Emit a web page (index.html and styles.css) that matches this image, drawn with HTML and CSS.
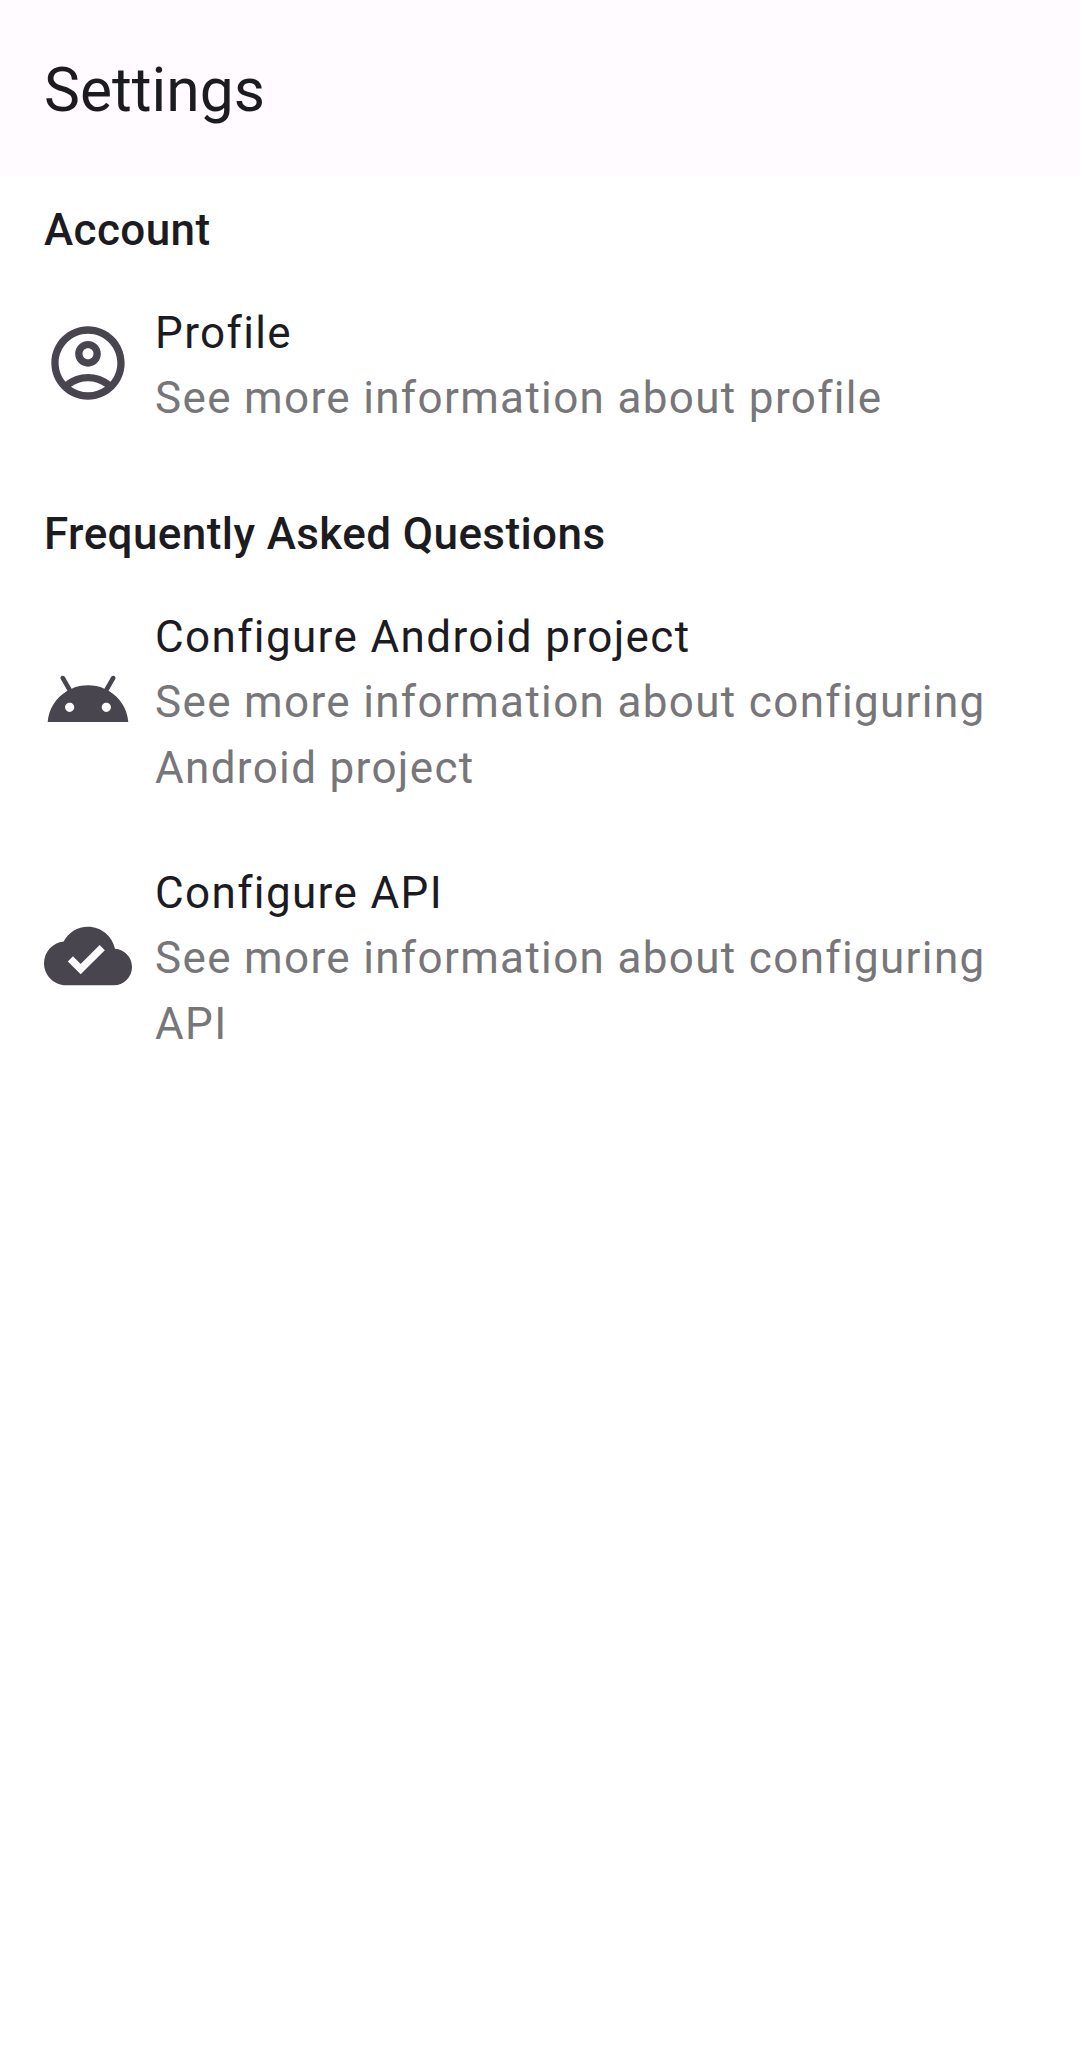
FILE: index.html
```html
<!DOCTYPE html>
<html lang="en">
<head>
<meta charset="utf-8">
<title>Settings</title>
<link rel="stylesheet" href="styles.css">
</head>
<body>
<header class="app-bar"><h1 class="app-title">Settings</h1></header>
<main class="content">
  <section class="group">
    <h2 class="group-title">Account</h2>
    <div class="item">
      <svg class="icon" viewBox="0 0 24 24"><path d="M12 2C6.480 2 2 6.480 2 12s4.480 10 10 10 10-4.480 10-10S17.520 2 12 2zM7.350 18.500C8.660 17.560 10.260 17 12 17s3.340.56 4.650 1.500C15.340 19.440 13.740 20 12 20s-3.340-.56-4.650-1.500zM18.140 17.120C16.450 15.800 14.320 15 12 15s-4.450.8-6.140 2.120C4.700 15.730 4 13.950 4 12c0-4.420 3.580-8 8-8s8 3.580 8 8c0 1.950-.7 3.730-1.860 5.120zM12 6c-1.930 0-3.500 1.570-3.500 3.500S10.070 13 12 13s3.500-1.570 3.500-3.500S13.930 6 12 6zm0 5c-.83 0-1.500-.67-1.500-1.500S11.170 8 12 8s1.500.67 1.500 1.500S12.830 11 12 11z" fill-rule="evenodd"/></svg>
      <div class="text"><p class="label">Profile</p><p class="detail">See more information about profile</p></div>
    </div>
  </section>
  <section class="group">
    <h2 class="group-title">Frequently Asked Questions</h2>
    <div class="item">
      <svg class="icon" viewBox="0 0 24 24"><path d="M17.600 9.480l1.840-3.180c.16-.31.04-.69-.26-.85-.29-.15-.65-.06-.83.22l-1.880 3.240c-2.860-1.210-6.080-1.210-8.940 0L5.650 5.670c-.19-.29-.58-.38-.87-.2-.28.18-.37.54-.22.83L6.400 9.480C3.300 11.250 1.280 14.440 1 18h22c-.28-3.560-2.300-6.750-5.400-8.520zM7 15.250c-.69 0-1.250-.56-1.250-1.250S6.310 12.750 7 12.750 8.250 13.310 8.250 14 7.690 15.250 7 15.250zm10 0c-.69 0-1.250-.56-1.250-1.250s.56-1.250 1.250-1.250 1.250.56 1.250 1.250-.56 1.250-1.250 1.250z"/></svg>
      <div class="text"><p class="label">Configure Android project</p><p class="detail">See more information about configuring Android project</p></div>
    </div>
    <div class="item">
      <svg class="icon" viewBox="0 0 24 24"><path d="M19.350 10.040C18.670 6.590 15.640 4 12 4 9.110 4 6.600 5.640 5.350 8.040 2.340 8.360 0 10.910 0 14c0 3.310 2.690 6 6 6h13c2.760 0 5-2.240 5-5 0-2.640-2.050-4.780-4.650-4.960zM10 17l-3.500-3.500 1.410-1.410L10 14.170l5.180-5.170 1.410 1.410L10 17z"/></svg>
      <div class="text"><p class="label">Configure API</p><p class="detail">See more information about configuring API</p></div>
    </div>
  </section>
</main>
</body>
</html>
```
FILE: styles.css
```css
body {
  margin: 0;
  background: #fff;
  color: #1c1b1f;
  font-family: Roboto, sans-serif;
}

h1, h2, p {
  margin: 0;
  font-weight: 400;
}

.app-bar {
  box-sizing: border-box;
  height: 176px;
  padding: 4px 44px 0;
  display: flex;
  align-items: center;
  background: #fffbff;
}

.app-title {
  font-size: 60.500px;
  line-height: 77px;
}

.content {
  padding-top: 4px;
}

.group-title {
  padding: 17px 44px 31px;
  font-size: 44px;
  line-height: 66px;
  font-weight: 500;
  letter-spacing: 0.410px;
}

.item {
  display: flex;
  align-items: center;
  gap: 23px;
  padding: 0 44px 52px;
}

.icon {
  flex: none;
  width: 88px;
  height: 88px;
  fill: #49454f;
}

.text {
  flex: 1;
  padding: 7px 0 1px;
}

.label {
  font-size: 44px;
  line-height: 64px;
  letter-spacing: 1.375px;
}

.detail {
  font-size: 44px;
  line-height: 66px;
  letter-spacing: 1.340px;
  color: #777679;
}
```
